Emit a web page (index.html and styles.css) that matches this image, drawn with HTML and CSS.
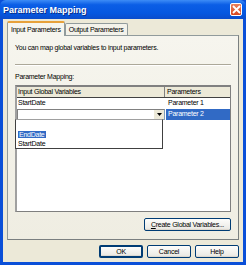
FILE: index.html
```html
<!DOCTYPE html>
<html lang="en">
<head>
	<meta charset="UTF-8">
	<title>Parameter Mapping</title>
	<link rel="stylesheet" href="styles.css">
</head>
<body>
	<div class="window">
		<div class="titlebar">
			<span class="title">Parameter Mapping</span>
			<span class="close">
				<svg width="9" height="9" viewBox="0 0 9 9"><path d="M1 1 L8 8 M8 1 L1 8" stroke="#fff" stroke-width="1.8"/></svg>
			</span>
		</div>
		<div class="client">
			<div class="tabs">
				<div class="tab active">Input Parameters</div>
				<div class="tab">Output Parameters</div>
			</div>
			<div class="panel">
				<p class="intro">You can map global variables to input parameters.</p>
				<div class="separator"></div>
				<p class="label">Parameter Mapping:</p>
				<div class="grid">
					<div class="grid-head">
						<div class="col-a">Input Global Variables</div>
						<div class="col-b">Parameters</div>
					</div>
					<div class="grid-row">
						<div class="col-a">StartDate</div>
						<div class="col-b">Parameter 1</div>
					</div>
					<div class="grid-row">
						<div class="col-a combo">
							<span class="combo-btn">
								<svg width="5" height="3" viewBox="0 0 5 3"><path d="M0 0 H5 L2.5 3 Z" fill="#000"/></svg>
							</span>
						</div>
						<div class="col-b selected">Parameter 2</div>
					</div>
					<div class="dropdown">
						<div class="item"></div>
						<div class="item"><span class="hl">EndDate</span></div>
						<div class="item">StartDate</div>
					</div>
				</div>
				<div class="panel-actions">
					<button class="btn wide"><u>C</u>reate Global Variables...</button>
				</div>
			</div>
			<div class="dialog-actions">
				<button class="btn default">OK</button>
				<button class="btn">Cancel</button>
				<button class="btn">Help</button>
			</div>
		</div>
	</div>
</body>
</html>
```

FILE: styles.css
```css
* {
	box-sizing: border-box;
}
body {
	margin: 0;
	font-family: "Liberation Sans", Arial, sans-serif;
	font-size: 7px;
	letter-spacing: -0.25px;
	color: #000;
}
p {
	margin: 0;
}
.window {
	width: 246px;
	height: 265px;
	background: #0a4fd8;
	padding: 0 3px 3px 3px;
	display: flex;
	flex-direction: column;
}
.titlebar {
	height: 19px;
	margin: 0 -3px;
	padding: 0 4px 0 3px;
	display: flex;
	align-items: center;
	justify-content: space-between;
	background: linear-gradient(#3d8cf6, #0b5ee6 25%, #0557e0 70%, #0a4ccb);
	border-radius: 6px 6px 0 0;
}
.title {
	color: #fff;
	font-weight: bold;
	font-size: 9px;
	letter-spacing: 0;
	text-shadow: 1px 1px 0 #0a2e8a;
}
.close {
	width: 12px;
	height: 13px;
	background: linear-gradient(#e9805c, #d9461f);
	border: 1px solid #fff;
	border-radius: 2px;
	display: flex;
	align-items: center;
	justify-content: center;
}
.client {
	flex: 1;
	background: #ece9d8;
	padding: 2px 4px 0 4px;
}
.tabs {
	display: flex;
	align-items: flex-end;
	height: 14px;
	position: relative;
	z-index: 1;
}
.tab {
	height: 12px;
	padding: 0 3px;
	line-height: 11px;
	border: 1px solid #919b9c;
	border-bottom: none;
	background: #f3f2ea;
	border-radius: 2px 2px 0 0;
}
.tab.active {
	height: 15px;
	margin-bottom: -1px;
	background: #f6f5ee;
	border-top: 2px solid #e7a13a;
	padding: 1px 3px 0 3px;
}
.panel {
	height: 205px;
	border: 1px solid #919b9c;
	border-right-color: #7a7f80;
	border-bottom-color: #7a7f80;
	background: linear-gradient(#f6f5ee, #efede2);
	padding: 7px 7px 0 7px;
	display: flex;
	flex-direction: column;
}
.intro {
	height: 14px;
	line-height: 9px;
}
.separator {
	height: 2px;
	border-top: 1px solid #aca899;
	border-bottom: 1px solid #fff;
	margin: 7px 0 0 0;
}
.label {
	margin-top: 6px;
	height: 13px;
	line-height: 9px;
}
.grid {
	position: relative;
	height: 127px;
	background: #fff;
	border: 1px solid #7f7f7f;
	border-left: 2px solid #a0a0a0;
	border-top: 2px solid #808080;
}
.grid-head,
.grid-row {
	display: flex;
	height: 11px;
}
.grid-head {
	background: #ece9d8;
	border-bottom: 1px solid #404040;
}
.grid-head .col-a {
	border-right: 1px solid #808080;
}
.col-a {
	width: 148px;
	padding-left: 1px;
	line-height: 10px;
}
.col-b {
	flex: 1;
	padding-left: 2px;
	line-height: 10px;
}
.grid-row .col-b {
	margin-left: 1px;
}
.selected {
	background: #316ac5;
	color: #fff;
}
.combo {
	border: 1px solid #7f9db9;
	border-top-color: #808080;
	border-left-color: #808080;
	display: flex;
	justify-content: flex-end;
	align-items: center;
}
.combo-btn {
	width: 10px;
	height: 9px;
	background: #ece9d8;
	display: flex;
	align-items: center;
	justify-content: center;
}
.dropdown {
	position: absolute;
	left: -2px;
	top: 32px;
	width: 148px;
	height: 30px;
	background: #fff;
	border: 1px solid #404040;
	border-top-color: #a0a0a0;
	padding: 1px 0 0 2px;
}
.item {
	height: 9px;
	line-height: 9px;
}
.hl {
	background: #316ac5;
	color: #fff;
	padding: 0 1px;
}
.panel-actions {
	display: flex;
	justify-content: flex-end;
	margin-top: 6px;
}
.btn {
	font-family: "Liberation Sans", Arial, sans-serif;
	font-size: 7px;
	letter-spacing: -0.25px;
	height: 13px;
	padding: 0;
	background: linear-gradient(#fdfdfb, #ecebe6 85%, #d6d0c5);
	border: 1px solid #003c74;
	border-radius: 2px;
	color: #000;
}
.btn.wide {
	width: 87px;
}
.dialog-actions {
	display: flex;
	justify-content: flex-end;
	gap: 4px;
	margin-top: 5px;
}
.dialog-actions .btn {
	width: 44px;
}
.btn.default {
	border: 2px solid #003c74;
}
```
